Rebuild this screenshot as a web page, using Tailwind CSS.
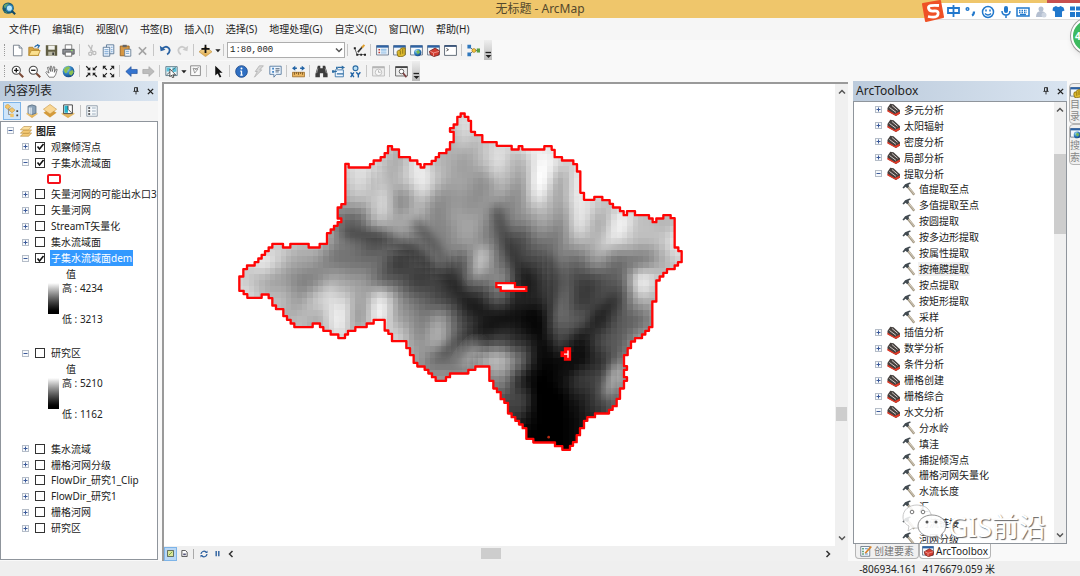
<!DOCTYPE html>
<html lang="zh-CN">
<head>
<meta charset="utf-8">
<title>无标题 - ArcMap</title>
<script src="https://cdn.jsdelivr.net/npm/@tailwindcss/browser@4"></script>
</head>
<body class="relative flex h-screen flex-col overflow-hidden bg-[#f9f9f9] font-['Noto_Sans','Noto_Sans_CJK_SC',sans-serif] text-[10px] leading-3 text-[#222]">

<svg class="absolute size-0" aria-hidden="true">
  <defs>
    <linearGradient id="gold" x1="0" y1="0" x2="0" y2="1"><stop offset="0" stop-color="#fbe3a6"/><stop offset="1" stop-color="#dca545"/></linearGradient>
    <radialGradient id="earth" cx=".35" cy=".3" r=".8"><stop offset="0" stop-color="#a8dcf5"/><stop offset=".5" stop-color="#2e7fc0"/><stop offset="1" stop-color="#123c78"/></radialGradient>
  </defs>
  <symbol id="app" viewBox="0 0 16 16"><circle cx="7" cy="7" r="6.5" fill="#195a70"/><path d="M2 4q3-3 6-2l-2 4-3 1zM2 10l3 1 1 2z" fill="#6aa66a"/><circle cx="8.5" cy="7" r="3.6" fill="#b9e6f7" stroke="#2a7fb5" stroke-width="1.4"/><path d="M11 10l4 4" stroke="#134a66" stroke-width="2.4"/></symbol>
  <symbol id="new" viewBox="0 0 16 16"><path d="M3 1.5h7l3.500 3.500v9.500H3z" fill="#fff" stroke="#66707c"/><path d="M10 1.500V5h3.500" fill="#dde6f0" stroke="#66707c"/></symbol>
  <symbol id="open" viewBox="0 0 16 16"><path d="M1 14V4h5l1 2h6v8z" fill="#d9a441" stroke="#a87a23"/><path d="M1 14l3-6h11l-2.500 6z" fill="#fbe08e" stroke="#b58a2e"/><path d="M8 4q2-3 5-2M11 .5L14 2l-2 3" fill="none" stroke="#2b6fae" stroke-width="1.400"/></symbol>
  <symbol id="save" viewBox="0 0 16 16"><path d="M1 1.500h14v13H1z" fill="#605d42"/><path d="M4 2h8v5H4z" fill="#f2f2ec"/><path d="M4 9.500h8v5H4z" fill="#b9b7a4"/><path d="M9 10.500h2v3H9z" fill="#333"/></symbol>
  <symbol id="print" viewBox="0 0 16 16"><path d="M4 1h8v6H4z" fill="#fff" stroke="#666"/><path d="M1 6.500h14v6H1z" fill="#8e9196" stroke="#4b4e52"/><path d="M4 10h8v5H4z" fill="#fff" stroke="#555"/><path d="M11 8h2" stroke="#8ee05f" stroke-width="1.500"/></symbol>
  <symbol id="cut" viewBox="0 0 16 16"><g fill="none" stroke="#bdbdbd" stroke-width="1.600"><path d="M4 1l6 9M9 1L7 9"/><circle cx="6.500" cy="12" r="2"/><circle cx="11.500" cy="11" r="2"/></g></symbol>
  <symbol id="copy" viewBox="0 0 16 16"><g fill="#eef6ff" stroke="#4b6a8a"><path d="M5.500 1h9v11h-9z"/><path d="M1.500 4h8v11h-8z"/><path d="M3 7h5M3 9.500h5M3 12h5M11 4h2M11 7h2M11 9.500h2" stroke="#5c90c5"/></g></symbol>
  <symbol id="paste" viewBox="0 0 16 16"><path d="M1.500 2.500h11v12h-11z" fill="#d79843" stroke="#8b5a1d"/><path d="M4.500 1h5v3h-5z" fill="#666"/><path d="M7 6.500h7.500v8.500H7z" fill="#f4f8fc" stroke="#5d748c"/><path d="M8.500 9h4M8.500 11.500h4" stroke="#5c90c5"/></symbol>
  <symbol id="del" viewBox="0 0 16 16"><path d="M3.500 4l9 9M12.500 4l-9 9" stroke="#a3a3a3" stroke-width="2"/></symbol>
  <symbol id="undo" viewBox="0 0 16 16"><path d="M3 7Q8 1 12 5q3 4-2 8" fill="none" stroke="#2a62a3" stroke-width="2.200"/><path d="M1 2l1 7 6-2z" fill="#2a62a3"/></symbol>
  <symbol id="redo" viewBox="0 0 16 16"><path d="M13 7Q8 1 4 5q-3 4 2 8" fill="none" stroke="#cbcbcb" stroke-width="2.200"/><path d="M15 2l-1 7-6-2z" fill="#cbcbcb"/></symbol>
  <symbol id="add" viewBox="0 0 16 16"><path d="M8 3.500l8 6L8 15.500 0 9.500z" fill="url(#gold)" stroke="#c3923c" stroke-width=".8"/><path d="M8 1v10M3 6h10" stroke="#111" stroke-width="2.200"/></symbol>
  <symbol id="caret" viewBox="0 0 8 16"><path d="M1.500 7h6L4.500 10.500z" fill="#222"/></symbol>
  <symbol id="edit" viewBox="0 0 16 16"><path d="M2 5l3 8h9" fill="none" stroke="#444"/><path d="M1 4h2.500v2.500H1zM4 12h2.500v2.500H4zM9 12h2v2.500H9zM13.500 12H16v2.500h-2.500z" fill="#222"/><path d="M6 10l6-7" stroke="#333" stroke-width="2"/><path d="M11 4.500l3-3.500" stroke="#e0a02f" stroke-width="2.500"/></symbol>
  <symbol id="win" viewBox="0 0 16 16"><path d="M.7 2h14.600v11.500H.7z" fill="#f4f8fc" stroke="#5a6a80"/><path d="M.7 1.700h14.600v2.800H.7z" fill="#2c62a4"/></symbol>
  <symbol id="toc" viewBox="0 0 16 16"><use href="#win"/><path d="M3 7h2M3 10.500h2" stroke="#c23c34" stroke-width="2"/><path d="M6 6.500h7M6 8.500h7M6 11h7" stroke="#67a6dc"/></symbol>
  <symbol id="catalog" viewBox="0 0 16 16"><use href="#win"/><path d="M5 11q0-4 3-3l1-2q2-2 6-1v8q-3 4-9 2z" fill="#dcb92e" stroke="#80670c"/><path d="M9 8v5M12 6v6" stroke="#80670c"/></symbol>
  <symbol id="search" viewBox="0 0 16 16"><use href="#win"/><circle cx="9.500" cy="10.500" r="4.500" fill="url(#earth)"/><path d="M7.500 9l3-1.500 2 3-3 2z" fill="#79b851"/></symbol>
  <symbol id="tbx" viewBox="0 0 16 16"><use href="#win"/><path d="M3 9l7-4 5.500 3.500-1 5-6 2L4 13z" fill="#d23c30" stroke="#71201b"/><path d="M4 9l4 2 7-2M8 11v4" fill="none" stroke="#f0a59e"/></symbol>
  <symbol id="python" viewBox="0 0 16 16"><path d="M.7 2h14.600v12H.7z" fill="#fff" stroke="#44505e"/><path d="M.7 2.500h14.600" stroke="#2c4a74" stroke-width="2"/><path d="M3 5.500L5.500 7 3 8.500" fill="none" stroke="#222"/></symbol>
  <symbol id="model" viewBox="0 0 16 16"><path d="M3 3l5 5-5 5M8 8h6" fill="none" stroke="#456"/><path d="M.5 1h4.500v4.500H.5zM.5 10.500h4.500V15H.5z" fill="#2e77bd"/><circle cx="8.500" cy="8" r="2.400" fill="#f5c33b" stroke="#91701c" stroke-width=".7"/><path d="M12 5.500h4v5h-4z" fill="#5a9e43"/></symbol>
  <symbol id="zin" viewBox="0 0 16 16"><path d="M10 10l5 5" stroke="#7a4936" stroke-width="2.600"/><circle cx="6.500" cy="6.500" r="5" fill="#fff" stroke="#4c4c4c" stroke-width="1.300"/><path d="M3.800 6.500h5.400M6.500 3.800v5.400" stroke="#111" stroke-width="1.600"/></symbol>
  <symbol id="zout" viewBox="0 0 16 16"><path d="M10 10l5 5" stroke="#7a4936" stroke-width="2.600"/><circle cx="6.500" cy="6.500" r="5" fill="#fff" stroke="#4c4c4c" stroke-width="1.300"/><path d="M3.800 6.500h5.400" stroke="#111" stroke-width="1.600"/></symbol>
  <symbol id="pan" viewBox="0 0 16 16"><path d="M5 15L1 9l1-1 3 2-2-7 1.500-.5L7 8 6.500 1.500H8L9 8l1.500-6 1.500.5L11.500 9l2-4 1.500.5L13 12l-2 3z" fill="#fff" stroke="#555" stroke-width=".9"/></symbol>
  <symbol id="globe" viewBox="0 0 16 16"><circle cx="8" cy="8" r="7.200" fill="url(#earth)"/><path d="M2 6q2-4 6-4.500l2 2-3 3-1 3-2 .5zM9 8l4-2 1.500 3-3 4-3-2z" fill="#8cc152"/></symbol>
  <symbol id="fin" viewBox="0 0 16 16"><path d="M1.500 1.500l4 4M14.500 1.500l-4 4M1.500 14.500l4-4M14.500 14.500l-4-4" stroke="#222" stroke-width="1.500"/><path d="M6.500 2.500v4h-4zM9.500 2.500v4h4zM6.500 13.500v-4h-4zM9.500 13.500v-4h4z" fill="#222"/></symbol>
  <symbol id="fout" viewBox="0 0 16 16"><path d="M2 2l4 4M14 2l-4 4M2 14l4-4M14 14l-4-4" stroke="#222" stroke-width="1.500"/><path d="M1 1h4.500L1 5.500zM15 1h-4.500L15 5.500zM1 15h4.500L1 10.500zM15 15h-4.500l4.500-4.500z" fill="#222"/></symbol>
  <symbol id="back" viewBox="0 0 16 16"><path d="M1 8l6.500-6v3.500H15v5H7.500V14z" fill="#3474cf" stroke="#1d4d99" stroke-width=".8"/></symbol>
  <symbol id="fwd" viewBox="0 0 16 16"><path d="M15 8L8.500 2v3.500H1v5h7.500V14z" fill="#bcbcbc" stroke="#a2a2a2" stroke-width=".8"/></symbol>
  <symbol id="sel" viewBox="0 0 16 16"><path d="M1 2h14v11H1z" fill="#e8f4f8" stroke="#4c6d7c"/><path d="M2 3h5l-2 5H2zM9 3h5v5l-4 1z" fill="#58c1dc"/><path d="M2 12l11-9" stroke="#555"/><path d="M6 5l7 7h-3.500l1.500 3-2 .5-1-3-2 2z" fill="#fff" stroke="#111" stroke-width=".8"/></symbol>
  <symbol id="clear" viewBox="0 0 16 16"><path d="M2 1h12v12H2z" fill="#fafafa" stroke="#777"/><path d="M5 4l6 1-4 5zM7 6l5-3" fill="none" stroke="#888"/></symbol>
  <symbol id="ptr" viewBox="0 0 16 16"><path d="M4 1l9 8.500H9l2.500 5-2 1-2.500-5L4 13z" fill="#111"/></symbol>
  <symbol id="info" viewBox="0 0 16 16"><circle cx="8" cy="8" r="7.200" fill="#2f6fc2" stroke="#1c4786"/><path d="M8 7v5.500M6.500 7.500H8M6.500 12.500h3" stroke="#fff" stroke-width="1.600"/><circle cx="8" cy="4.200" r="1.200" fill="#fff"/></symbol>
  <symbol id="bolt" viewBox="0 0 16 16"><path d="M9 1h5L9.500 6H12L3 15l3.500-7H4z" fill="#d8d8d8" stroke="#b2b2b2"/></symbol>
  <symbol id="html" viewBox="0 0 16 16"><path d="M1 1.500h14v10H9l-3 3.500v-3.500H1z" fill="#eef6ff" stroke="#4a6f96"/><path d="M4 4.500h2M4 8.500h2" stroke="#2e77bd" stroke-width="2"/><path d="M8 4.500h5M8 6.500h5M8 8.500h4" stroke="#456"/></symbol>
  <symbol id="measure" viewBox="0 0 16 16"><path d="M0 4l4-3v2h2v2H4v2zM16 4l-4-3v2h-2v2h2v2z" fill="#2263a5"/><path d="M.5 9h15v5.500H.5z" fill="#eab560" stroke="#9c6e2a"/><path d="M3 9v3M5.500 9v2M8 9v3M10.500 9v2M13 9v3" stroke="#6b4a1a"/></symbol>
  <symbol id="find" viewBox="0 0 16 16"><path d="M3.500 1h3v3h3V1h3l3 10v4h-5.500v-5H6v5H.5v-4z" fill="#3c3c3c"/><path d="M2 10l1.500-6M14 10l-1.500-6" stroke="#aaa"/></symbol>
  <symbol id="route" viewBox="0 0 16 16"><path d="M4 6h10v8.500H4z" fill="#eef6ff" stroke="#2e6da4"/><path d="M1 8h5M6 11h8M7 3h6" stroke="#2e6da4" stroke-width="1.500"/><path d="M12 .5l4 2.500-4 2.500z" fill="#2e6da4"/><path d="M0 6.500h3v3H0zM5 2h2v3H5z" fill="#2e6da4"/></symbol>
  <symbol id="xy" viewBox="0 0 16 16"><circle cx="8" cy="4" r="3" fill="#b9e0f7" stroke="#2e6da4" stroke-width="1.400"/><path d="M2 9l4 6M6 9l-4 6M9 9l2.500 3L14 9M11.500 12v3.500" fill="none" stroke="#2263a5" stroke-width="1.700"/></symbol>
  <symbol id="time" viewBox="0 0 16 16"><path d="M.7 2h14.600v11.500H.7z" fill="#eee" stroke="#b5b5b5"/><path d="M.7 3h14.600" stroke="#b5b5b5" stroke-width="2"/><circle cx="8" cy="9" r="4" fill="#f8f8f8" stroke="#b5b5b5"/><path d="M8 6.500V9h2.500" fill="none" stroke="#aaa"/></symbol>
  <symbol id="viewer" viewBox="0 0 16 16"><path d="M.7 2h14.600v11.500H.7z" fill="#eee" stroke="#555"/><path d="M.7 2.700h14.600" stroke="#444" stroke-width="2"/><circle cx="8" cy="8" r="2.800" fill="#fff" stroke="#444"/><path d="M10 10l4 5" stroke="#7a3e3e" stroke-width="2"/></symbol>
  <symbol id="over" viewBox="0 0 8 20"><path d="M1.500 12.500h5.500" stroke="#222" stroke-width="1.300"/><path d="M1.500 15h6L4.500 18z" fill="#222"/></symbol>
  <symbol id="pin" viewBox="0 0 8 10"><path d="M2 .5h4v4.500M2 .5V5M.5 5.500h7M4 5.500v4M5.300.5V5" fill="none" stroke="#222" stroke-width="1.200"/></symbol>
  <symbol id="x" viewBox="0 0 8 8"><path d="M1 1l6 6M7 1L1 7" stroke="#222" stroke-width="1.600"/></symbol>
  <symbol id="order" viewBox="0 0 16 16"><path d="M4 5v7h4M4 6h5" fill="none" stroke="#8a8a8a"/><path d="M3 0l3.500 3L3 6-.5 3zM8 4l3.500 3L8 10 4.500 7z" fill="#f2c469" stroke="#c08f35" stroke-width=".6"/><path d="M6 11h4v4H6z" fill="#f2c469"/><path d="M13 7h2v2h-2zM13 12h2v2h-2z" fill="#444"/></symbol>
  <symbol id="source" viewBox="0 0 16 16"><path d="M8 7l7 4-7 5-7-5z" fill="url(#gold)"/><path d="M3.500 2.500q4.500-3 9 0v8q-4.500 3-9 0z" fill="#8ba2b8" stroke="#5d7286"/><path d="M5 4v7M7 4v8" stroke="#dce7f0" stroke-width="1.600"/></symbol>
  <symbol id="layers" viewBox="0 0 16 16"><path d="M8 5l7.500 5L8 15.500.5 10z" fill="#d49b3c"/><path d="M8 .5L15.500 6 8 11.500.5 6z" fill="#f9d795" stroke="#c99743" stroke-width=".7"/></symbol>
  <symbol id="bysel" viewBox="0 0 16 16"><path d="M8 6l8 5-8 5-8-5z" fill="url(#gold)"/><path d="M3 1h10v10H3z" fill="#fff" stroke="#333"/><path d="M4 2h4v8H4z" fill="#25b5ce"/><path d="M8 2v4l4 4" fill="none" stroke="#333"/></symbol>
  <symbol id="options" viewBox="0 0 16 16"><path d="M1 1h14v14H1z" fill="#f6f9fc" stroke="#7c8b99"/><path d="M3 4h2.500M3 8h2.500M3 12h2.500" stroke="#333" stroke-width="2"/><path d="M8 4h5M8 8h5M8 12h5" stroke="#8296aa"/></symbol>
  <symbol id="frame" viewBox="0 0 16 16"><g fill="#f3c976" stroke="#a87a2c" stroke-width=".7"><path d="M5 10.500h10.500l-4 4.500H.5z"/><path d="M5 6.500h10.500l-4 4.500H.5z"/><path d="M5 2h10.500l-4 4.500H.5z" fill="#fbdf9f"/></g></symbol>
  <symbol id="kit" viewBox="0 0 16 16"><path d="M.5 6L4 1l4 .5 8 7.500v4l-5 3-10-6z" fill="#45403e"/><path d="M.5 8l9 5.500 6.500-3V13l-5 3L.5 10.500z" fill="#e03a28"/><path d="M3 5.500l8 6M6 3l7 6" stroke="#d5ccc8" stroke-width="1.200"/></symbol>
  <symbol id="hammer" viewBox="0 0 16 16"><path d="M6 4.500l8 10" stroke="#a59a86" stroke-width="2.800"/><path d="M6.500 4.500l7.500 9.500" stroke="#dcd4c2" stroke-width="1"/><path d="M.5 6.500l3-4 5-2 2 .5-3 2 .5 2-2 2-2-1.500-2 2z" fill="#414a50"/></symbol>
  <symbol id="feat" viewBox="0 0 16 16"><path d="M1 2h12v13H1z" fill="#f7fbff" stroke="#567"/><path d="M3 5h2M3 8.500h2M3 12h2" stroke="#3a8a55" stroke-width="2"/><path d="M6.500 5h4M6.500 12h4" stroke="#5c90c5" stroke-width="1.500"/><path d="M7 11l8-9" stroke="#d9832b" stroke-width="2.500"/></symbol>
  <symbol id="up" viewBox="0 0 8 8"><path d="M1 5.500l3-3 3 3" fill="none" stroke="#555" stroke-width="1.500"/></symbol>
  <symbol id="down" viewBox="0 0 8 8"><path d="M1 2.500l3 3 3-3" fill="none" stroke="#555" stroke-width="1.500"/></symbol>
  <symbol id="left" viewBox="0 0 8 8"><path d="M5.500 1l-3 3 3 3" fill="none" stroke="#333" stroke-width="1.500"/></symbol>
  <symbol id="right" viewBox="0 0 8 8"><path d="M2.500 1l3 3-3 3" fill="none" stroke="#333" stroke-width="1.500"/></symbol>
</svg>

<header class="relative flex h-[18px] shrink-0 items-center justify-center bg-[#efc66b] text-xs text-[#54482c]">
  <svg class="absolute top-0.5 left-0.5 size-[14px]" aria-hidden="true"><use href="#app"/></svg>
  <h1>无标题 - ArcMap</h1>
</header>

<nav class="flex h-[22px] shrink-0 items-center gap-3 bg-[#f6f6f6] px-[9px]" aria-label="菜单">
  <button>文件(F)</button><button>编辑(E)</button><button>视图(V)</button><button>书签(B)</button><button>插入(I)</button><button>选择(S)</button><button>地理处理(G)</button><button>自定义(C)</button><button>窗口(W)</button><button>帮助(H)</button>
</nav>

<div class="flex h-[41px] shrink-0 flex-col items-start bg-[#f9f9f9]">
  <div id="bar1" class="flex h-[20px] items-center bg-[#f3f3f3]" role="toolbar" aria-label="标准"></div>
  <div id="bar2" class="mt-px flex h-[20px] items-center bg-[#f3f3f3]" role="toolbar" aria-label="工具"></div>
</div>

<main class="flex min-h-0 flex-1">
  <aside class="flex w-[158px] shrink-0 flex-col">
    <div class="flex h-5 shrink-0 items-center bg-linear-to-r from-[#bccbdc] to-[#d9e4f0] px-1">
      <h2 class="flex-1 text-xs">内容列表</h2>
      <button class="mr-2" aria-label="固定"><svg class="h-2 w-1.5"><use href="#pin"/></svg></button>
      <button aria-label="关闭"><svg class="size-[7px]"><use href="#x"/></svg></button>
    </div>
    <div class="flex h-5 shrink-0 items-center gap-1 bg-[#f5f5f5] pl-[3px]">
      <button class="grid h-[18px] w-[18px] place-items-center border border-[#7db4e8] bg-[#cfe5fa]" aria-label="按绘制顺序列出"><svg class="size-[14px]"><use href="#order"/></svg></button>
      <button aria-label="按源列出"><svg class="size-[14px]"><use href="#source"/></svg></button>
      <button aria-label="按可见性列出"><svg class="size-[14px]"><use href="#layers"/></svg></button>
      <button aria-label="按选择列出"><svg class="size-[14px]"><use href="#bysel"/></svg></button>
      <span class="mx-px h-3 w-px bg-[#c4c4c4]"></span>
      <button aria-label="选项"><svg class="size-3"><use href="#options"/></svg></button>
    </div>
    <div class="mb-px min-h-0 flex-1 overflow-hidden border border-[#8f959c] bg-white">
      <ul id="layersTree" class="mt-px grid h-[413px] auto-rows-fr"></ul>
    </div>
  </aside>

  <section class="mt-px ml-[4px] flex min-w-0 flex-1 flex-col border-t-2 border-l-2 border-[#9a9a9a] bg-[#f0f0f0]" aria-label="地图">
    <div class="flex min-h-0 flex-1">
      <svg class="min-w-0 flex-1 bg-white" viewBox="164 84 671 461">
        <defs>
          <clipPath id="basin"><use href="#edge"/></clipPath>
          <filter id="soft" x="-30%" y="-30%" width="160%" height="160%"><feGaussianBlur stdDeviation="14"/></filter>
        </defs>
        <g transform="translate(230 100) scale(.33333)">
          <g clip-path="url(#basin)">
            <g id="dem" shape-rendering="crispEdges"></g>
            <g filter="url(#soft)" fill="none" stroke-linecap="round">
              <g stroke="#000" stroke-opacity=".3" stroke-width="30">
                <path d="M350 400Q480 400 560 460T700 590T900 640L950 740V1040"/>
                <path d="M800 330Q830 450 880 520T910 640"/>
                <path d="M560 370Q620 430 690 560"/>
                <path d="M1150 600Q1060 700 1000 760L960 860"/>
                <path d="M960 480Q1000 560 930 680"/>
                <path d="M640 760Q700 690 840 660"/>
              </g>
              <g stroke="#fff" stroke-opacity=".35" stroke-width="24">
                <path d="M960 165L925 290"/><path d="M1040 290V380"/><path d="M1190 360L1120 440"/><path d="M810 170L790 220"/>
                <path d="M580 210V270"/><path d="M700 70V130"/><path d="M300 560V660"/><path d="M450 210L470 330"/><path d="M760 450L740 520"/>
                <path d="M740 740L700 790"/><path d="M1160 800L1130 880"/><path d="M1230 530L1240 580"/><path d="M450 580V640"/>
              </g>
            </g>
          </g>
          <path id="edge" fill="none" stroke="#ff0505" stroke-width="7" stroke-linejoin="round" d="M346 190H356V201H420V191H431V180H452V170H464V158H474V137H486V147H507V170H540V180H562V191H572V201H583V191H605V181H617V170H627V158H649V147H660V125H671V94H660V83H671V72H682V49H692V39H704V49H715V61H723V94H735V104H757V125H800V136H845V147H866V137H877V147H943V137H965V148H974V170H996V180H1030V191H1041V213H1051V277H1062V298H1093V289H1117V299H1139V310H1149V321H1170V332H1181V344H1191V332H1215V344H1257V354H1268V365H1279V354H1300V344H1322V353H1334V441H1345V452H1355V485H1344V495H1334V506H1311V517H1300V528H1289V540H1279V603H1267V680H1257V691H1246V702H1236V713H1215V723H1203V743H1193V764H1182V797H1191V808H1182V830H1191V841H1182V864H1170V895H1160V917H1148V928H1137V939H1095V950H1072V961H1062V983H1050V1004H1040V1025H1029V1036H1020V1048H997V1037H975V1026H910V1015H889V983H878V972H867V961H856V950H845V939H834V907H823V896H812V875H801V864H790V841H778V798H736V808H715V819H660V830H648V841H617V830H606V819H595V808H584V798H562V787H551V764H540V743H529V722H486V700H475V690H464V658H431V669H410V680H376V691H354V702H345V713H325V702H302V691H280V680H270V669H248V680H193V669H182V658H171V647H160V626H138V615H127V593H116V582H95V592H52V581H41V571H28V528H40V506H51V495H74V485H85V474H95V463H105V452H116V441H127V430H159V441H181V430H236V441H269V430H291V398H302V387H312V376H323V365H334V354H323V321H334V311H346Z"/>
          <path fill="#fff" stroke="#ff0505" stroke-width="7" d="M799 548H855V560H889V571H812V560H799Z"/>
          <path fill="#ff0505" stroke="#ff0505" stroke-width="7" d="M1005 744H1020V777H1005V766H995V756H1005Z"/>
          <path fill="none" stroke="#fff" stroke-width="4" d="M1014 750V772M1002 761H1014"/>
          <circle cx="956" cy="1010" r="4" fill="#b52a14"/>
        </g>
      </svg>
      <div class="flex w-[13px] shrink-0 flex-col items-center bg-[#f0f0f0]">
        <svg class="mt-1 size-2"><use href="#up"/></svg>
        <span class="flex-1"></span>
        <span class="h-3.5 w-[11px] bg-[#cdcdcd]"></span>
        <span class="h-[113px]"></span>
        <svg class="mb-1 size-2"><use href="#down"/></svg>
      </div>
    </div>
    <div class="flex h-[15px] shrink-0 items-center bg-[#f0f0f0] pr-4">
      <button class="grid h-[14px] w-[13px] place-items-center border border-[#7db4e8] bg-[#b9d7f5]" aria-label="数据视图"><svg class="size-[7px]" viewBox="0 0 8 8"><path d="M.5.5h7v7h-7z" fill="#dbe69a" stroke="#4b5a4b"/><path d="M2 6l4-4" stroke="#6a9a3d"/></svg></button>
      <button class="grid w-[14px] place-items-center" aria-label="布局视图"><svg class="size-[7px]" viewBox="0 0 8 8"><path d="M1 .5h4l2 2v5H1z" fill="#fff" stroke="#444"/><path d="M2.500 4h3v2h-3z" fill="#557"/></svg></button>
      <span class="mx-0.5 h-2.5 w-px bg-[#aaa]"></span>
      <button class="grid w-[15px] place-items-center" aria-label="刷新视图"><svg class="size-2" viewBox="0 0 8 8"><path d="M1 4a3 3 0 0 1 5-2M7 4a3 3 0 0 1-5 2" fill="none" stroke="#2a5f9e" stroke-width="1.200"/><path d="M7.500.5V3H5zM.5 7.500V5H3z" fill="#2a5f9e"/></svg></button>
      <button class="grid w-3 place-items-center" aria-label="暂停绘制"><svg class="size-[7px]" viewBox="0 0 8 8"><path d="M2.500 1v6M5.500 1v6" stroke="#2a5f9e" stroke-width="1.600"/></svg></button>
      <svg class="ml-1 size-2"><use href="#left"/></svg>
      <span class="w-[246px]"></span>
      <span class="h-[11px] w-5 bg-[#cdcdcd]"></span>
      <span class="flex-1"></span>
      <svg class="size-2"><use href="#right"/></svg>
    </div>
  </section>

  <aside class="ml-[5px] flex w-[214px] shrink-0 flex-col">
    <div class="flex h-5 shrink-0 items-center bg-linear-to-r from-[#bccbdc] to-[#d9e4f0] px-[3px]">
      <h2 class="flex-1 text-xs">ArcToolbox</h2>
      <button class="mr-2" aria-label="固定"><svg class="h-2 w-1.5"><use href="#pin"/></svg></button>
      <button aria-label="关闭"><svg class="size-[7px]"><use href="#x"/></svg></button>
    </div>
    <div class="flex min-h-0 flex-1 overflow-hidden border border-[#8f959c] bg-white">
      <ul id="toolsTree" class="grid h-[445px] min-w-0 flex-1 auto-rows-fr"></ul>
      <div class="flex w-3 shrink-0 flex-col items-center bg-[#f0f0f0]">
        <svg class="mt-1 size-2"><use href="#up"/></svg>
        <span class="mt-10 h-20 w-3 bg-[#cdcdcd]"></span>
        <span class="flex-1"></span>
        <svg class="mb-1 size-2"><use href="#down"/></svg>
      </div>
    </div>
    <div class="flex h-[17px] shrink-0 items-start pl-0.5 leading-[14px]">
      <button class="flex h-[15px] items-center gap-0.5 rounded-b-sm border border-t-0 border-[#b5b5b5] bg-[#f0f0f0] pr-1 pl-1 text-[#777]"><svg class="size-3"><use href="#feat"/></svg>创建要素</button>
      <button class="flex h-[15px] items-center gap-0.5 rounded-b-sm border border-t-0 border-[#b5b5b5] bg-white px-0.5"><svg class="size-3"><use href="#tbx"/></svg>ArcToolbox</button>
    </div>
  </aside>

  <div class="flex w-[13px] shrink-0 flex-col overflow-hidden pl-0.5 text-[#888]">
    <button class="mt-0.5 flex h-[41px] w-5 flex-col items-start rounded-l-sm border border-[#b5b5b5] bg-[#f0f0f0] pt-0.5 leading-3"><svg class="size-3 shrink-0"><use href="#catalog"/></svg><span>目</span><span>录</span></button>
    <button class="flex h-[41px] w-5 flex-col items-start rounded-l-sm border border-[#b5b5b5] bg-[#f0f0f0] pt-0.5 leading-3"><svg class="size-3 shrink-0"><use href="#search"/></svg><span>搜</span><span>索</span></button>
  </div>
</main>

<footer class="flex h-[15px] shrink-0 items-center justify-end gap-1.5 bg-[#efefef] pt-px pr-[85px]">
  <span>-806934.161</span><span>4176679.059 米</span>
</footer>

<!-- Input-method bar and floating widgets -->
<div class="absolute top-0 right-0 h-1 w-[33px] bg-[#c75050]"></div>
<div class="absolute top-[3px] right-0 flex h-[17px] w-[145px] items-center border-b border-[#ddd] bg-white pl-3 text-[#2178cc]">
  <svg class="w-full" viewBox="0 0 133 16" height="16" aria-hidden="true">
    <g fill="none" stroke="#2178cc" stroke-width="1.500">
      <path d="M1 5h11v5H1zM6.500 2v12" stroke-width="1.800"/>
      <circle cx="20.500" cy="6" r="1.300"/><path d="M27 8.500q0 3-2 4" stroke-width="2.200"/>
      <circle cx="41" cy="9" r="5.500"/><path d="M38 10.500q3 3 6 0M39 6.500v2M43 6.500v2"/>
      <path d="M55 8q0 4 4 4t4-4M59 12v3"/>
      <path d="M70 5h12v8H70z"/><path d="M72 7.500h8M72 9.500h8" stroke-dasharray="1.500 1"/><path d="M73 11.500h6"/>
    </g>
    <rect x="57" y="3" width="4" height="7" rx="2" fill="#2178cc"/>
    <circle cx="94" cy="6" r="2.500" fill="#b4bfd0"/><path d="M89 14q0-6 5-6t5 6z" fill="#b4bfd0"/><circle cx="97" cy="12" r="2.500" fill="#cdd5e1"/>
    <path d="M106 4.500l3-1.500q2.500 2 4.500 0l3 1.500 1 3-2.500 1V14h-7V8.500l-2.500-1z" fill="#2178cc"/>
    <path d="M123 3.500h5v4h-5zM123 9h5v5h-5zM129 3.500h5v4h-5zM129 9h5v5h-5z" fill="#2178cc"/>
  </svg>
</div>
<svg class="absolute top-0 right-[136px] h-[22px] w-[23px]" viewBox="0 0 23 22" aria-hidden="true"><path d="M2 4L19 1l3 16L5 21z" fill="#ef5126" stroke="#ef5126" stroke-width="2" stroke-linejoin="round"/><path d="M18 5.500Q7 4.500 7.500 8t5.500 3 4 3.500-10 2" fill="none" stroke="#fff" stroke-width="2.800"/></svg>
<div class="absolute top-[18px] -right-[27px] flex size-9 items-center rounded-full border-2 border-white bg-[#3dba5f] pl-0.5 font-bold text-white shadow-md ring-1 ring-[#999]">4</div>

<div class="pointer-events-none absolute right-[34px] bottom-[28px] flex h-[50px] items-end" aria-hidden="true">
  <svg class="mb-1 h-[42px] w-[46px]" viewBox="0 0 46 42">
    <path d="M15 3C7 3 1 8 1 15c0 4 2 7 6 9l-1 5 5-3q9 1 13-4Q31 18 29 12 26 3 15 3z" fill="#fff" fill-opacity=".85" stroke="#bbb" stroke-width=".8"/>
    <circle cx="10" cy="10" r="1.800" fill="#fff" stroke="#777"/><circle cx="21" cy="10" r="1.800" fill="#fff" stroke="#777"/>
    <path d="M30 13c-8 0-14 5-14 11s6 11 14 11l5-1 5 4-1-5q5-4 5-9c0-6-6-11-14-11z" fill="#fff" fill-opacity=".92" stroke="#888" stroke-width=".9"/>
    <circle cx="25" cy="20" r="1.500" fill="#555"/><circle cx="34" cy="20" r="1.500" fill="#555"/>
  </svg>
  <span class="text-[27px] leading-[42px] text-white [text-shadow:1px_1px_1px_#666]">GIS前沿</span>
</div>

<script>
// Toolbars: [icon, label] is a button, "|" a separator, "v" a drop-down arrow, "scale" the scale box
const bars = {
  bar1: [['new','新建'],['open','打开'],['save','保存'],['print','打印'],'|',['cut','剪切'],['copy','复制'],['paste','粘贴'],['del','删除'],'|',['undo','撤消'],['redo','恢复'],'|',['add','添加数据'],'v','|','scale','|',['edit','编辑器'],'|',['toc','内容列表'],['catalog','目录'],['search','搜索'],['tbx','ArcToolbox'],['python','Python'],'|',['model','模型构建器']],
  bar2: [['zin','放大'],['zout','缩小'],['pan','平移'],['globe','全图'],'|',['fin','固定比例放大'],['fout','固定比例缩小'],'|',['back','上一视图'],['fwd','下一视图'],'|',['sel','选择要素'],'v',['clear','清除选择'],'|',['ptr','选择元素'],'|',['info','识别'],['bolt','超链接'],['html','HTML 弹出窗口'],'|',['measure','测量'],'|',['find','查找'],['route','查找路径'],['xy','转到 XY'],'|',['time','时间滑块'],'|',['viewer','查看器窗口']]
};
for (const [id, items] of Object.entries(bars)) {
  document.getElementById(id).innerHTML = '<span class="ml-1 mr-1 h-3 border-l border-dotted border-[#999]"></span>' + items.map(i =>
    i === '|' ? '<span class="mr-[3px] ml-0.5 h-3 w-px bg-[#c6c6c6]"></span>' :
    i === 'v' ? '<svg class="h-3.5 w-[7px]"><use href="#caret"/></svg>' :
    i === 'scale' ? '<span class="relative flex items-center"><input class="h-4 w-[118px] border border-[#adadad] bg-white pl-0.5 font-[Liberation_Mono,monospace] text-[9px]" aria-label="比例" value="1:80,000"><svg class="absolute right-0.5 size-2"><use href="#down"/></svg></span>' :
    `<button class="grid size-[17px] place-items-center" aria-label="${i[1]}"><svg class="size-[13px]"><use href="#${i[0]}"/></svg></button>`
  ).join('') + '<button class="ml-0.5 h-5 w-2 bg-linear-to-b from-[#eee] to-[#b9b9b9]" aria-label="工具栏选项"><svg class="h-5 w-2"><use href="#over"/></svg></button>';
}

const toggle = open => `<button class="grid size-[7px] shrink-0 place-items-center border border-[#b5bdc8] bg-[#f8fafc]" aria-label="${open ? '折叠' : '展开'}"><svg class="size-[5px]" viewBox="0 0 5 5"><path d="${open ? 'M.5 2.500h4' : 'M.5 2.500h4M2.500 .5v4'}" stroke="#3c5a9a"/></svg></button>`;

// Layer rows: [name, expanded, visible, selected]
const legend = (hi, lo) => `<li class="flex items-center pl-[65px]">值</li><li class="row-span-4 flex gap-[3px] pl-[47px]"><span class="mt-px h-[31px] w-[11px] bg-linear-to-b from-white to-black"></span><span class="flex h-[43px] flex-col justify-between"><span>高 : ${hi}</span><span>低 : ${lo}</span></span></li>`;
const layer = (name, open, on, sel, n) => `<li class="flex items-center pl-[21px]">${toggle(open)}<input id="ly${n}" type="checkbox" ${on ? 'checked' : ''} class="peer mr-[5px] ml-[6px] size-[10px] shrink-0 appearance-none border border-[#333] bg-white"><svg class="pointer-events-none -ml-[14px] mr-[5px] hidden size-[9px] shrink-0 peer-checked:block" viewBox="0 0 9 9"><path d="M1.500 4.500l2 2.500 4-5" fill="none" stroke="#111" stroke-width="1.600"/></svg><label for="ly${n}" class="${sel ? 'bg-[#3399ff] px-px leading-4 text-white whitespace-nowrap' : 'px-px whitespace-nowrap'}">${name}</label></li>`;
document.getElementById('layersTree').innerHTML =
  `<li class="flex items-center gap-1 pl-1.5 font-bold">${toggle(true)}<svg class="ml-0.5 size-3"><use href="#frame"/></svg>图层</li>` +
  layer('观察倾泻点', 0, 1, 0, 1) + layer('子集水流域面', 1, 1, 0, 2) +
  '<li class="flex items-center pl-[46px]"><span class="h-2.5 w-3.5 rounded-xs border-2 border-[#f5101a]"></span></li>' +
  layer('矢量河网的可能出水口3', 0, 0, 0, 3) + layer('矢量河网', 0, 0, 0, 4) + layer('StreamT矢量化', 0, 0, 0, 5) + layer('集水流域面', 0, 0, 0, 6) +
  layer('子集水流域面dem', 1, 1, 1, 7) + legend(4234, 3213) + layer('研究区', 1, 0, 0, 8) + legend(5210, 1162) +
  ['集水流域', '栅格河网分级', 'FlowDir_研究1_Clip', 'FlowDir_研究1', '栅格河网', '研究区'].map((n, i) => layer(n, 0, 0, 0, 9 + i)).join('');

// Toolbox rows: "+" closed set, "-" open set, "." tool, "*" hovered tool
document.getElementById('toolsTree').innerHTML = '+多元分析,+太阳辐射,+密度分析,+局部分析,-提取分析,.值提取至点,.多值提取至点,.按圆提取,.按多边形提取,.按属性提取,*按掩膜提取,.按点提取,.按矩形提取,.采样,+插值分析,+数学分析,+条件分析,+栅格创建,+栅格综合,-水文分析,.分水岭,.填洼,.捕捉倾泻点,.栅格河网矢量化,.水流长度,.汇,.河流链接,.河网分级'.split(',').map(t => {
  const k = t[0], name = t.slice(1);
  return k === '+' || k === '-'
    ? `<li class="flex items-center pl-[21px]">${toggle(k === '-')}<svg class="mr-1 ml-[5px] size-[13px]"><use href="#kit"/></svg>${name}</li>`
    : `<li class="flex items-center pl-12"><svg class="mr-0.5 size-[14px]"><use href="#hammer"/></svg><span class="${k === '*' ? 'bg-[#f0f0f0] px-px leading-[14px]' : 'px-px'}">${name}</span></li>`;
}).join('');

// Elevation samples, one hex digit per 20 map units, from (240,100)
const grid = [
  'cccccccccccdcdddccccccc', 'cccccccccccddddedddcccc', 'ccccccedbecbcdeeddccccc', 'ccccccecbebabdbfddccccc', 'ccccccdbbeba9bafbeccccc',
  'cccccabc9b99999daeccccc', 'ccccc77baa8a978a9dbecbc', 'ccccb866878996578bbdbce', 'ceca9776458' + '6a74577978ad', 'dba89a97544' + '578336456dcc',
  'dcbacdad965' + '335236445abb', 'bbbbbeaea89' + '522116535799', 'bbbbbdbcc9a' + '644314246999', 'bbbbbbbbb97' + '79b611137888', 'aaaaaaaa999' + '988301359999',
  '99999999988' + '885400247777', '88888888888' + '774200137777', '77777777777' + '772000136666', '77777777777' + '772000136666'
];
const at = (c, r) => parseInt(grid[Math.min(18, Math.max(0, r))][Math.min(22, Math.max(0, c))], 16);
const cubic = (a, b, c, d, t) => b + t * (c - a + t * (2 * a - 5 * b + 4 * c - d + t * (3 * (b - c) + d - a))) / 2;
const rowAt = (c, r, u) => cubic(at(c - 1, r), at(c, r), at(c + 1, r), at(c + 2, r), u);
let cells = '';
for (let y = 36; y < 1052; y += 18) for (let x = 24; x < 1360; x += 16) {
  const gx = (x + 8 - 30) / 60, gy = (y + 9) / 60, c = Math.floor(gx), r = Math.floor(gy), u = gx - c, v = gy - r;
  const e = cubic(rowAt(c, r - 1, u), rowAt(c, r, u), rowAt(c, r + 1, u), rowAt(c, r + 2, u), v);
  const g = Math.round(Math.max(0, Math.min(255, e * 16.5 + (e > 1 ? Math.sin(x * 12.9 + y * 3.1) * 4 : 0))));
  cells += `<rect x="${x}" y="${y}" width="17" height="19" fill="rgb(${g},${g},${g})"/>`;
}
document.getElementById('dem').innerHTML = cells;
</script>
</body>
</html>
